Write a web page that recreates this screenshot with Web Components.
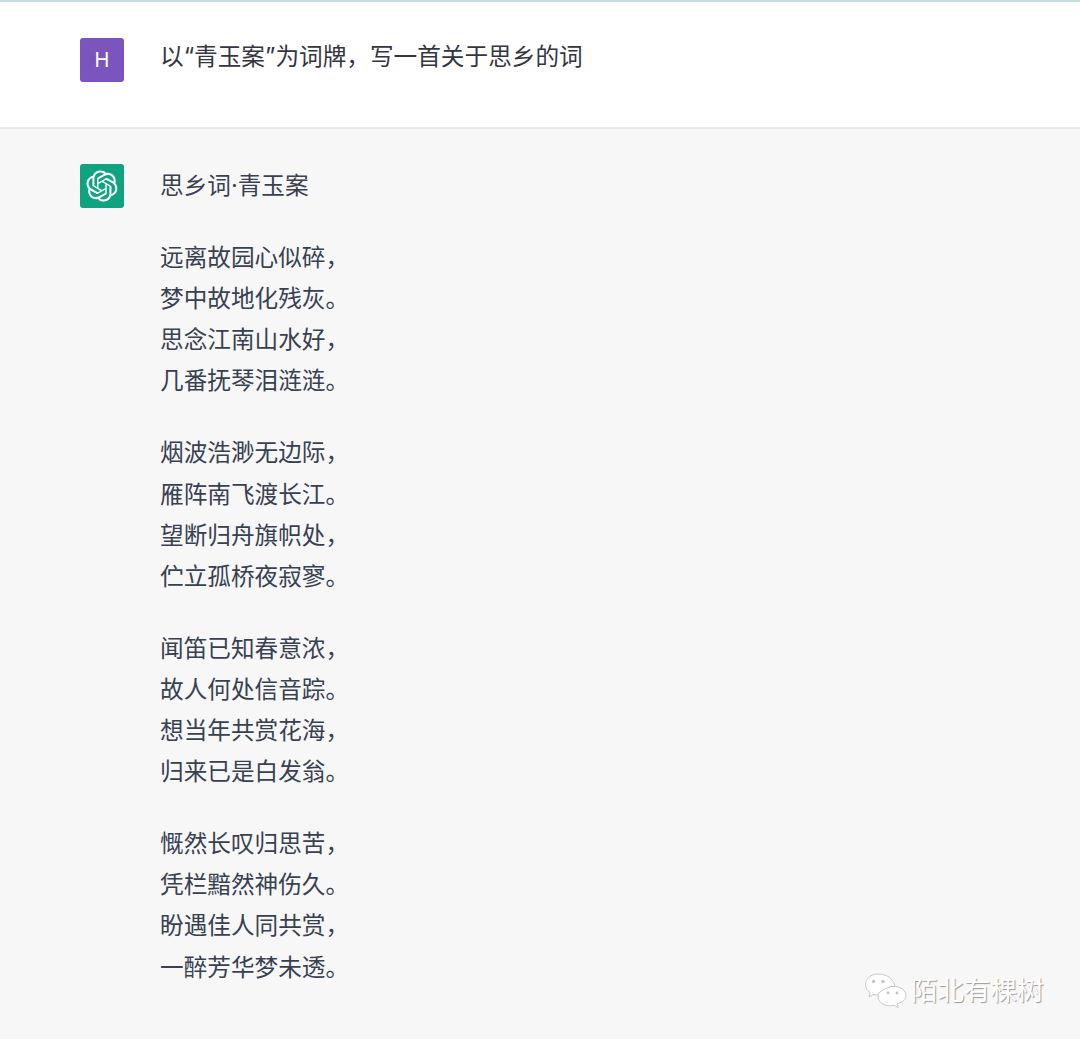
<!DOCTYPE html>
<html lang="zh-CN">
<head>
<meta charset="utf-8">
<title>青玉案</title>
<style>
  html, body { margin: 0; height: 100%; }
  body {
    height: 1039px;
    overflow: hidden;
    background: #f7f7f8;
    font-family: Inter, "Noto Sans CJK SC", sans-serif;
    color: #374151;
    border-top: 2px solid #c3dfdf;
    box-sizing: border-box;
    position: relative;
  }
</style>
</head>
<body>
  <chat-row kind="user">
    <chat-avatar slot="avatar" kind="user">H</chat-avatar>
    <div>以“青玉案”为词牌，写一首关于思乡的词</div>
  </chat-row>

  <chat-row kind="bot">
    <chat-avatar slot="avatar" kind="bot"></chat-avatar>
    <poem-stanza>思乡词·青玉案</poem-stanza>
    <poem-stanza>远离故园心似碎，
梦中故地化残灰。
思念江南山水好，
几番抚琴泪涟涟。</poem-stanza>
    <poem-stanza>烟波浩渺无边际，
雁阵南飞渡长江。
望断归舟旗帜处，
伫立孤桥夜寂寥。</poem-stanza>
    <poem-stanza>闻笛已知春意浓，
故人何处信音踪。
想当年共赏花海，
归来已是白发翁。</poem-stanza>
    <poem-stanza>慨然长叹归思苦，
凭栏黯然神伤久。
盼遇佳人同共赏，
一醉芳华梦未透。</poem-stanza>
  </chat-row>

  <wechat-mark>陌北有棵树</wechat-mark>

<script>
class ChatRow extends HTMLElement {
  constructor () {
    super();
    this.attachShadow({ mode: 'open' });
    this.shadowRoot.innerHTML = `
    <style>
      :host {
        display: flex;
        gap: 36px;
        padding: 36px 80px 0;
        font-size: 23.65px;
        box-sizing: border-box;
      }
      :host([kind="user"]) {
        height: 127px;
        background: #fff;
        color: #343541;
        line-height: 38px;
        border-bottom: 2px solid #e9e9ea;
      }
      :host([kind="bot"]) {
        padding-top: 35px;
        line-height: 41.1px;
      }
      :host([kind="bot"]) .body { padding-top: 1px; }
      .body { display: flex; flex-direction: column; gap: 31px; }
    </style>
    <slot name="avatar"></slot>
    <div class="body"><slot></slot></div>`;
  }
}

class ChatAvatar extends HTMLElement {
  constructor () {
    super();
    this.attachShadow({ mode: 'open' });
    this.shadowRoot.innerHTML = `
    <style>
      :host {
        flex: none;
        display: flex;
        align-items: center;
        justify-content: center;
        width: 44px;
        height: 44px;
        border-radius: 3px;
        color: #fff;
        font-size: 20px;
        line-height: 1;
      }
      :host([kind="user"]) { background: #7b55bd; }
      :host([kind="bot"]) { background: #10a37f; }
      svg { width: 32px; height: 32px; display: block; }
    </style>
    <slot></slot>`;
    if (this.getAttribute('kind') === 'bot') {
      this.shadowRoot.innerHTML += `
      <svg viewBox="0 0 41 41" fill="#fff"><path d="M37.5324 16.8707C37.9808 15.5241 38.1363 14.0974 37.9886 12.6859C37.8409 11.2744 37.3934 9.91076 36.676 8.68622C35.6126 6.83404 33.9882 5.3676 32.0373 4.4985C30.0864 3.62941 27.9098 3.40259 25.8215 3.85078C24.8796 2.7893 23.7219 1.94125 22.4257 1.36341C21.1295 0.785575 19.7249 0.491269 18.3058 0.500197C16.1708 0.495044 14.0893 1.16803 12.3614 2.42214C10.6335 3.67624 9.34853 5.44666 8.6917 7.47815C7.30085 7.76286 5.98686 8.3414 4.8377 9.17505C3.68854 10.0087 2.73073 11.0782 2.02839 12.312C0.956464 14.1591 0.498905 16.2988 0.721698 18.4228C0.944492 20.5467 1.83612 22.5449 3.268 24.1293C2.81966 25.4759 2.66413 26.9026 2.81182 28.3141C2.95951 29.7256 3.40701 31.0892 4.12437 32.3138C5.18791 34.1659 6.8123 35.6322 8.76321 36.5013C10.7141 37.3704 12.8907 37.5973 14.9789 37.1492C15.9208 38.2107 17.0786 39.0587 18.3747 39.6366C19.6709 40.2144 21.0755 40.5087 22.4946 40.4998C24.6307 40.5054 26.7133 39.8321 28.4418 38.5772C30.1704 37.3223 31.4556 35.5506 32.1119 33.5179C33.5027 33.2332 34.8167 32.6547 35.9659 31.821C37.115 30.9874 38.0728 29.9178 38.7752 28.684C39.8458 26.8371 40.3023 24.6979 40.0789 22.5748C39.8556 20.4517 38.9639 18.4544 37.5324 16.8707ZM22.4978 37.8849C20.7443 37.8874 19.0459 37.2733 17.6994 36.1501C17.7601 36.117 17.8666 36.0586 17.936 36.0161L25.9004 31.4156C26.1003 31.3019 26.2663 31.137 26.3813 30.9378C26.4964 30.7386 26.5563 30.5124 26.5549 30.2825V19.0542L29.9213 20.998C29.9389 21.0068 29.9541 21.0198 29.9656 21.0359C29.977 21.052 29.9842 21.0707 29.9867 21.0902V30.3889C29.9842 32.375 29.1946 34.2791 27.7909 35.6841C26.3872 37.0892 24.4838 37.8806 22.4978 37.8849ZM6.39227 31.0064C5.51397 29.4888 5.19742 27.7107 5.49804 25.9832C5.55718 26.0187 5.66048 26.0818 5.73461 26.1244L13.699 30.7248C13.8975 30.8408 14.1233 30.902 14.3532 30.902C14.583 30.902 14.8088 30.8408 15.0073 30.7248L24.731 25.1103V28.9979C24.7321 29.0177 24.7283 29.0376 24.7199 29.0556C24.7115 29.0736 24.6988 29.0893 24.6829 29.1012L16.6317 33.7497C14.9096 34.7416 12.8643 35.0097 10.9447 34.4954C9.02506 33.9811 7.38785 32.7263 6.39227 31.0064ZM4.29707 13.6194C5.17156 12.0998 6.55279 10.9364 8.19885 10.3327C8.19885 10.4013 8.19491 10.5228 8.19491 10.6071V19.808C8.19351 20.0378 8.25334 20.2638 8.36823 20.4629C8.48312 20.6619 8.64893 20.8267 8.84863 20.9404L18.5723 26.5542L15.206 28.4979C15.1894 28.5089 15.1703 28.5155 15.1505 28.5173C15.1307 28.5191 15.1107 28.516 15.0924 28.5082L7.04046 23.8557C5.32135 22.8601 4.06716 21.2235 3.55289 19.3046C3.03862 17.3858 3.30624 15.3413 4.29707 13.6194ZM31.955 20.0556L22.2312 14.4411L25.5976 12.4981C25.6142 12.4872 25.6333 12.4805 25.6531 12.4787C25.6729 12.4769 25.6928 12.4801 25.7111 12.4879L33.7631 17.1364C34.9967 17.849 36.0017 18.8982 36.6606 20.1613C37.3194 21.4244 37.6047 22.849 37.4832 24.2684C37.3617 25.6878 36.8382 27.0432 35.9743 28.1759C35.1103 29.3086 33.9415 30.1717 32.6047 30.6641C32.6047 30.5947 32.6047 30.4733 32.6047 30.3889V21.188C32.6066 20.9586 32.5474 20.7328 32.4332 20.5338C32.319 20.3348 32.154 20.1698 31.955 20.0556ZM35.3055 15.0128C35.2464 14.9765 35.1431 14.9142 35.069 14.8717L27.1045 10.2712C26.906 10.1554 26.6803 10.0943 26.4504 10.0943C26.2206 10.0943 25.9948 10.1554 25.7963 10.2712L16.0726 15.8858V11.9982C16.0715 11.9783 16.0753 11.9585 16.0837 11.9405C16.0921 11.9225 16.1048 11.9068 16.1207 11.8949L24.1719 7.25025C25.4053 6.53903 26.8158 6.19376 28.2383 6.25482C29.6608 6.31589 31.0364 6.78077 32.2044 7.59508C33.3723 8.40939 34.2842 9.53945 34.8334 10.8531C35.3826 12.1667 35.5464 13.6095 35.3055 15.0128ZM14.2424 21.9419L10.8752 19.9981C10.8576 19.9893 10.8423 19.9763 10.8309 19.9602C10.8195 19.9441 10.8122 19.9254 10.8098 19.9058V10.6071C10.8107 9.18295 11.2173 7.78848 11.9819 6.58696C12.7466 5.38544 13.8377 4.42659 15.1275 3.82264C16.4173 3.21869 17.8524 2.99464 19.2649 3.1767C20.6775 3.35876 22.0089 3.93941 23.1034 4.85067C23.0427 4.88379 22.937 4.94215 22.8668 4.98473L14.9024 9.58517C14.7025 9.69878 14.5366 9.86356 14.4215 10.0626C14.3065 10.2616 14.2466 10.4877 14.2479 10.7175L14.2424 21.9419ZM16.071 17.9991L20.4018 15.4978L24.7325 17.9975V22.9985L20.4018 25.4983L16.071 22.9985V17.9991Z"/></svg>`;
    }
  }
}

class PoemStanza extends HTMLElement {
  constructor () {
    super();
    this.attachShadow({ mode: 'open' });
    this.shadowRoot.innerHTML = `
    <style>
      :host { display: block; }
      slot { white-space: pre-line; }
    </style>
    <slot></slot>`;
  }
}

class WechatMark extends HTMLElement {
  constructor () {
    super();
    this.attachShadow({ mode: 'open' });
    this.shadowRoot.innerHTML = `
    <style>
      :host {
        position: absolute;
        left: 864px;
        top: 970px;
        display: flex;
        align-items: center;
        gap: 4px;
        font-size: 26.5px;
        line-height: 36px;
        color: #fff;
        text-shadow: 1px 1px 1px #9a9a9a;
      }
      svg { width: 43px; height: 36px; display: block; margin-top: -1px; }
    </style>
    <svg viewBox="0 0 43 36">
      <g fill="#fff" stroke="#bdbdbd" stroke-width=".8">
        <path d="M14 2C7 2 1.500 6.500 1.500 12.500c0 3.500 2 6.300 4.800 8.300L5 25l5-2.700c1.500.5 3 .7 4.500.7 1 0 2-.1 3-.3 3-6 9-9 13.500-8C30 7 23 2 14 2z"/>
        <path d="M42 24c0-5.500-5.300-9.500-11.200-9.500C24.800 14.500 14 18.500 14 24s5 9.800 11.800 9.800c1.400 0 2.800-.2 4.100-.6l4.400 2.400-1.100-3.800C39 30 42 27.200 42 24z"/>
      </g>
      <g fill="#c4c4c4">
        <circle cx="9.500" cy="9.500" r="1.700"/><circle cx="19" cy="9.500" r="1.700"/>
        <circle cx="24" cy="21" r="1.400"/><circle cx="33" cy="21" r="1.400"/>
      </g>
    </svg>
    <slot></slot>`;
  }
}

customElements.define('chat-row', ChatRow);
customElements.define('chat-avatar', ChatAvatar);
customElements.define('poem-stanza', PoemStanza);
customElements.define('wechat-mark', WechatMark);
</script>
</body>
</html>
